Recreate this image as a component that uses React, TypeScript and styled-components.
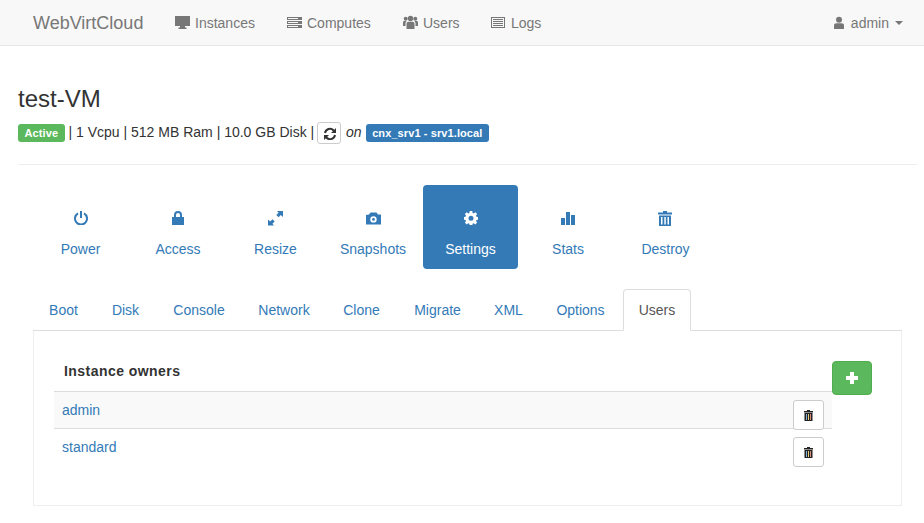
import React from "react";
import styled, { createGlobalStyle } from "styled-components";

const Global = createGlobalStyle`
  html, body { margin: 0; padding: 0; background: #fff; overflow: hidden; }
  body { font-family: "Liberation Sans", Arial, sans-serif; font-size: 14px; line-height: 20px; color: #333; }
`;

const Navbar = styled.nav`
  height: 45px; background: #f8f8f8; border-bottom: 1px solid #e7e7e7;
  display: flex; align-items: center; padding: 0 21px 0 33px; color: #777;
`;
const Brand = styled.div`font-size: 18px; margin-right: 32px; width: 110px; white-space: nowrap;`;
const NavItem = styled.div<{ $w: number }>`
  width: ${(p) => p.$w}px; display: flex; align-items: center; gap: 5px; white-space: nowrap;
`;
const NavRight = styled.div`margin-left: auto; display: flex; align-items: center; gap: 5px;`;
const Caret = styled.span`
  width: 0; height: 0; margin-left: 1px; border-top: 4px solid #777;
  border-left: 4px solid transparent; border-right: 4px solid transparent;
`;
const Page = styled.main`padding: 0 7px 0 18px;`;
const Title = styled.h1`font-size: 24px; font-weight: 400; line-height: 26px; margin: 40px 0 0; color: #333;`;
const Meta = styled.div`display: flex; align-items: center; height: 22px; margin-top: 10px; white-space: pre;`;
const Specs = styled.span`margin-bottom: 2px;`;
const Label = styled.span<{ $bg: string }>`
  background: ${(p) => p.$bg}; color: #fff; font-weight: 700; font-size: 11px; line-height: 18px; letter-spacing: .1px;
  height: 18px; padding: 0 6.5px; border-radius: 3px; white-space: nowrap;
`;
const RefreshButton = styled.button`
  width: 24px; height: 22px; margin: 0 5px 0 -1px; padding: 0; background: #fff; border: 1px solid #ccc;
  border-radius: 3px; display: flex; align-items: center; justify-content: center; color: #333;
`;
const OnText = styled.em`margin-right: 4px; margin-bottom: 2px;`;
const Rule = styled.hr`border: 0; border-top: 1px solid #eee; margin: 20px 0 20px;`;
const Body = styled.div`padding: 0 15px;`;
const Pills = styled.div`display: flex; gap: 2.5px;`;
const Pill = styled.a<{ $active?: boolean }>`
  width: 95px; height: 84px; box-sizing: border-box; border-radius: 4px; padding-top: 26px;
  display: flex; flex-direction: column; align-items: center; gap: 14px;
  background: ${(p) => (p.$active ? "#337ab7" : "transparent")};
  color: ${(p) => (p.$active ? "#fff" : "#337ab7")};
`;
const PillIcon = styled.span`height: 14px; display: block;`;
const Tabs = styled.div`display: flex; gap: 2px; margin-top: 20px; height: 41px; border-bottom: 1px solid #ddd;`;
const Tab = styled.a<{ $active?: boolean; $w: number }>`
  box-sizing: border-box; width: ${(p) => p.$w}px; height: 42px; padding: 10px 0; text-align: center;
  border: 1px solid transparent; border-radius: 4px 4px 0 0; color: #337ab7;
  ${(p) => p.$active && "color:#555;background:#fff;border-color:#ddd #ddd transparent;"}
`;
const Panel = styled.section`
  box-sizing: border-box; height: 175px; border: 1px solid #eee; border-top: 0; padding: 30px 29px 0 20px; display: flex;
`;
const Owners = styled.div`flex: 1;`;
const OwnersTitle = styled.div`font-weight: 700; font-size: 14px; letter-spacing: .45px; padding: 0 0 0 10px; height: 30px; line-height: 20px;`;
const Row = styled.div<{ $shade?: boolean }>`
  box-sizing: border-box; height: 37px; border-top: 1px solid #ddd; display: flex; justify-content: space-between;
  padding: 8px 8px 0; color: #337ab7; background: ${(p) => (p.$shade ? "#f9f9f9" : "#fff")};
`;
const TrashButton = styled.button`
  box-sizing: border-box; width: 31px; height: 30px; padding: 0; background: #fff; border: 1px solid #ccc; border-radius: 3px;
  display: flex; align-items: center; justify-content: center; position: relative; z-index: 1;
`;
const AddButton = styled.button`
  box-sizing: border-box; width: 40px; height: 34px; padding: 0; background: #5cb85c; border: 1px solid #4cae4c; border-radius: 4px;
  color: #fff; display: flex; align-items: center; justify-content: center;
`;

const Svg = ({ s = 14, children }: { s?: number; children: React.ReactNode }) => (
  <svg width={s} height={s} viewBox={`0 0 ${s} ${s}`} fill="currentColor" style={{ display: "block", flex: "none" }}>{children}</svg>
);
const Desktop = () => <Svg s={15}><path d="M0 1h15v10H10v1.500h1.500V14h-8v-1.500H5V11H0z" /></Svg>;
const Tasks = () => <Svg s={15}><path d="M0 2h15v3H0zM0 6h15v3H0zM0 10h15v3H0z" /><path fill="#f8f8f8" d="M1 3h10v1H1zM1 7h10v1H1zM1 11h10v1H1z" /></Svg>;
const UsersIcon = () => <Svg s={15}><circle cx="7.500" cy="3.500" r="2.700" /><circle cx="2.700" cy="3.800" r="2" /><circle cx="12.300" cy="3.800" r="2" /><path d="M3.500 14V9c0-1.500 1-2.300 2-2.300h4c1 0 2 .8 2 2.300v5zM0 11V7.500C0 6.300.7 6 1.500 6H3.500L2.500 8v3zM15 11V7.500C15 6.300 14.300 6 13.500 6H11.500L12.500 8v3z" /></Svg>;
const ListIcon = () => <Svg s={15}><path fillRule="evenodd" d="M0 2h14v11H0zM1 3v9h12V3z" /><path d="M2 4h10v1H2zM2 6h10v1H2zM2 8h10v1H2zM2 10h10v1H2z" /></Svg>;
const UserIcon = () => <Svg><circle cx="7" cy="3.800" r="3" /><path d="M2 13V9.500C2 8 3 7.300 4.500 7.300h5C11 7.300 12 8 12 9.500V13z" /></Svg>;
const Refresh = () => <Svg s={13}><path fill="none" stroke="currentColor" strokeWidth="2" d="M2 6a5 5 0 0 1 8.600-2.500L12 5M12 8a5 5 0 0 1-8.600 2.500L2 9" /><path d="M13 1v5H8zM1 13V8h5z" /></Svg>;
const Power = () => <Svg><path fill="none" stroke="currentColor" strokeWidth="2" d="M4 2.300a6 6 0 1 0 6 0" /><path d="M6 0h2v7H6z" /></Svg>;
const Lock = () => <Svg><path fill="none" stroke="currentColor" strokeWidth="2" d="M4 6.500V4a3 3 0 0 1 6 0v2.500" /><path d="M1 6h12v8H1z" /></Svg>;
const Resize = () => <Svg s={15}><path d="M9 0h6v6l-2.200-2.100-2.300 2.300-2.200-2.200 2.300-2.300zM6 14.500H0v-6l2.200 2.100 2.300-2.300 2.200 2.200-2.300 2.300z" /></Svg>;
const Camera = () => <Svg s={15}><path fillRule="evenodd" d="M0 4 3 3.500 4.500 1.500h6L12 3.500h3V13.500H0zM7.500 5.200a3.200 3.200 0 1 0 0 6.400 3.200 3.200 0 0 0 0-6.400zm0 1.800a1.400 1.400 0 1 1 0 2.800 1.400 1.400 0 0 1 0-2.800z" /></Svg>;
const Cog = () => <Svg><path fillRule="evenodd" d="M5.700 0h2.600l.3 1.900 1.100.5 1.600-1.100 1.800 1.800-1.100 1.600.5 1.100L14.400 6v2.600l-1.900.3-.5 1.100 1.100 1.600-1.800 1.800-1.600-1.100-1.100.5-.3 1.900H5.700l-.3-1.900-1.100-.5-1.600 1.100L.9 11.600 2 10l-.5-1.100-1.900-.3V6l1.900-.3.5-1.100L.9 3.100l1.800-1.800 1.600 1.100 1.100-.5zM7 4.800a2.500 2.500 0 1 0 0 5 2.500 2.500 0 0 0 0-5z" /></Svg>;
const Stats = () => <Svg><path d="M0 7h4v7H0zM5 1h4v13H5zM10 4h4v10h-4z" /></Svg>;
const Trash = () => <Svg s={15}><path d="M5 0h4v1.500h5V3.500H0V1.500h5z" /><path fillRule="evenodd" d="M1 4.500h12V15H1zM3 6v7.500h1.500V6zM6.300 6v7.500h1.500V6zM9.500 6v7.500H11V6z" /></Svg>;
const SmallTrash = () => (
  <Svg s={11}>
    <path fill="#222" d="M4 0h3v1h3v1.500H1V1h3zM1.500 3h8v8h-8z" />
    <path fill="#7fb0d8" d="M3 4h1v6H3z" /><path fill="#e8cf7a" d="M5 4h1v6H5z" /><path fill="#d98a7a" d="M7 4h1v6H7z" />
  </Svg>
);
const Plus = () => <Svg><path d="M5 1h4v4h4v4H9v4H5V9H1V5h4z" /></Svg>;

const pills: [string, React.ReactNode][] = [
  ["Power", <Power />], ["Access", <Lock />], ["Resize", <Resize />], ["Snapshots", <Camera />],
  ["Settings", <Cog />], ["Stats", <Stats />], ["Destroy", <Trash />],
];
const tabs: [string, number][] = [
  ["Boot", 61], ["Disk", 59], ["Console", 84], ["Network", 82], ["Clone", 69],
  ["Migrate", 79], ["XML", 59], ["Options", 81], ["Users", 68],
];

export default function App() {
  return (
    <>
      <Global />
      <Navbar>
        <Brand>WebVirtCloud</Brand>
        <NavItem $w={112}><Desktop />Instances</NavItem>
        <NavItem $w={116}><Tasks />Computes</NavItem>
        <NavItem $w={88}><UsersIcon />Users</NavItem>
        <NavItem $w={60}><ListIcon />Logs</NavItem>
        <NavRight><UserIcon />admin<Caret /></NavRight>
      </Navbar>
      <Page>
        <Title>test-VM</Title>
        <Meta>
          <Label $bg="#5cb85c">Active</Label>
          <Specs>{" | 1 Vcpu | 512 MB Ram | 10.0 GB Disk | "}</Specs>
          <RefreshButton><Refresh /></RefreshButton>
          <OnText>on</OnText>
          <Label $bg="#337ab7">cnx_srv1 - srv1.local</Label>
        </Meta>
        <Rule />
        <Body>
          <Pills>
            {pills.map(([name, icon]) => (
              <Pill key={name} $active={name === "Settings"}><PillIcon>{icon}</PillIcon><span>{name}</span></Pill>
            ))}
          </Pills>
          <Tabs>
            {tabs.map(([t, w]) => <Tab key={t} $w={w} $active={t === "Users"}>{t}</Tab>)}
          </Tabs>
          <Panel>
            <Owners>
              <OwnersTitle>Instance owners</OwnersTitle>
              <Row $shade>admin<TrashButton><SmallTrash /></TrashButton></Row>
              <Row>standard<TrashButton><SmallTrash /></TrashButton></Row>
            </Owners>
            <AddButton><Plus /></AddButton>
          </Panel>
        </Body>
      </Page>
    </>
  );
}
